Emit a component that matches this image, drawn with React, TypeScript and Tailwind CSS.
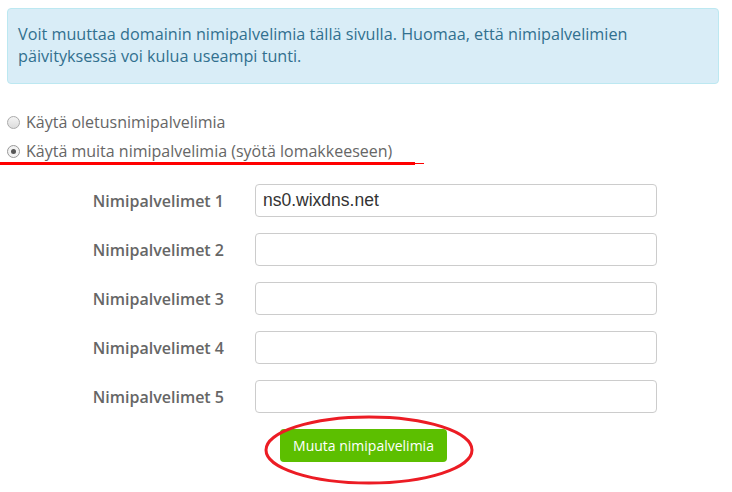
import React from "react";

const rows = [1, 2, 3, 4, 5];

export default function App() {
  return (
    <div className="w-[732px] h-[492px] bg-white overflow-hidden relative" style={{ fontFamily: '"Open Sans", sans-serif' }}>
      <div className="pt-[8px] pl-[7px] pr-[13px]">
        <div className="bg-[#d9edf7] border border-[#bce8f1] rounded-[4px] text-[#31708f] text-[16.2px] leading-[22px] pl-[10px] pt-[14px] pb-[16px]">
          Voit muuttaa domainin nimipalvelimia tällä sivulla. Huomaa, että nimipalvelimien
          <br />
          päivityksessä voi kulua useampi tunti.
        </div>
      </div>

      <div className="mt-[27px] pl-[7px] text-[16px] text-[#666] flex flex-col gap-[7px]">
        <label className="flex items-center gap-[6px] h-[22px]">
          <span className="w-[13px] h-[13px] rounded-full border border-[#aaa] bg-gradient-to-b from-[#f4f4f4] to-[#dcdcdc]" />
          <span>Käytä oletusnimipalvelimia</span>
        </label>
        <label className="flex items-center gap-[6px] h-[22px] relative">
          <span className="w-[13px] h-[13px] rounded-full border border-[#999] bg-[#f2f2f2] grid place-items-center">
            <span className="w-[5px] h-[5px] rounded-full bg-[#555]" />
          </span>
          <span>Käytä muita nimipalvelimia (syötä lomakkeeseen)</span>
          <span className="absolute left-[-7px] top-[22px] w-[415px] h-[3px] bg-[#ff0000]" />
          <span className="absolute left-[405px] top-[23px] w-[12px] h-px bg-[#ff0000]" />
        </label>
      </div>

      <div className="mt-[22px] flex flex-col gap-[16px]">
        {rows.map((n) => (
          <div key={n} className="flex items-center">
            <div className="w-[224px] text-right font-semibold text-[16px] text-[#666]">Nimipalvelimet {n}</div>
            <input
              className="ml-[31px] w-[402px] h-[33px] border border-[#ccc] rounded-[4px] px-[7px] text-[17.5px] text-[#333] outline-none"
              style={{ fontFamily: '"Liberation Sans", Arial, sans-serif' }}
              defaultValue={n === 1 ? "ns0.wixdns.net" : ""}
            />
          </div>
        ))}
      </div>

      <div className="mt-[16px] pl-[280px]">
        <div className="relative w-[167px]">
          <button className="w-[167px] h-[33px] bg-[#5cbf00] text-white text-[14px] rounded-[4px]">Muuta nimipalvelimia</button>
          <svg className="absolute left-[-16px] top-[-14px]" width="210" height="70" viewBox="0 0 210 70">
            <ellipse cx="105" cy="35" rx="103" ry="33" fill="none" stroke="#ec1c24" strokeWidth="3" />
          </svg>
        </div>
      </div>
    </div>
  );
}
